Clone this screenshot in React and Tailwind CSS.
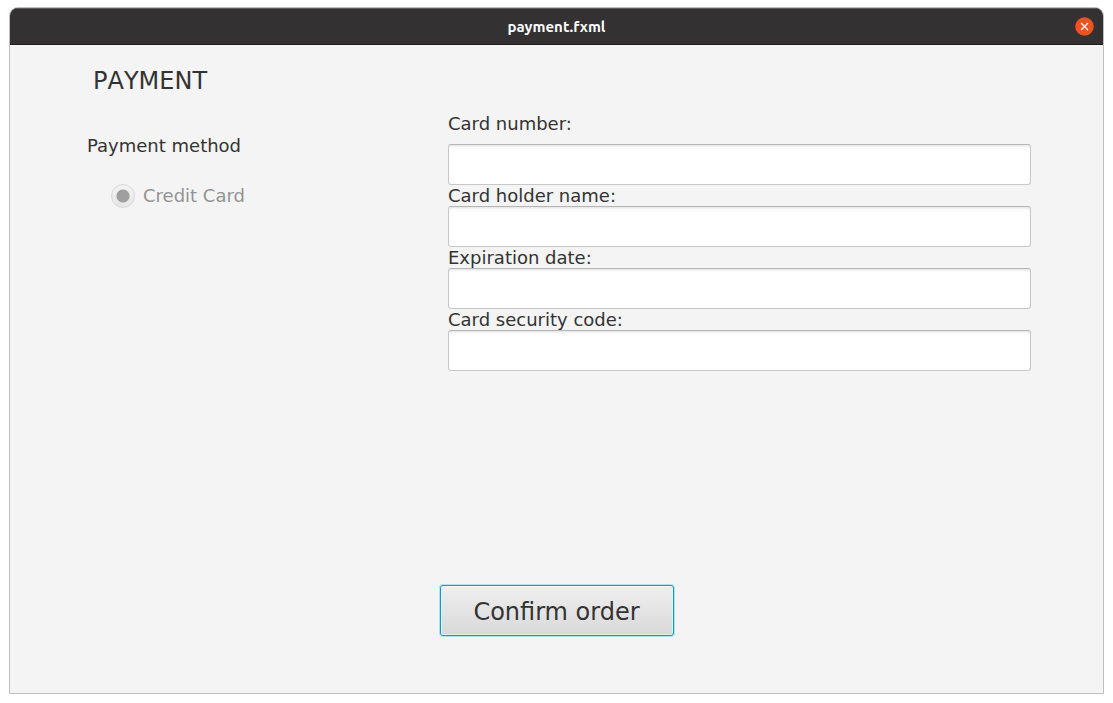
const fields = [
  { id: "number", label: "Card number:", gap: "mb-[10px]" },
  { id: "holder", label: "Card holder name:", gap: "" },
  { id: "expiration", label: "Expiration date:", gap: "" },
  { id: "code", label: "Card security code:", gap: "" },
];

export default function App() {
  return (
    <div className="flex min-h-screen flex-col bg-white px-[9px] pt-[7px] pb-[9px] font-['DejaVu_Sans',sans-serif] text-[#333]">
      <div className="flex grow flex-col overflow-hidden rounded-t-[9px] border border-[#bfbfbf] bg-[#f4f4f4]">
        <header className="grid h-[37px] grid-cols-[1fr_auto_1fr] items-center border-t border-b border-t-[#5c5b5b] border-b-[#1f1f1f] bg-[#333132] px-[9px]">
          <span />
          <h1 className="pt-px font-['Ubuntu','Noto_Sans',sans-serif] text-[15px] leading-5 font-bold text-white">payment.fxml</h1>
          <button type="button" aria-label="Close" className="justify-self-end">
            <svg className="block size-[19px]" viewBox="0 0 19 19">
              <circle cx="9.5" cy="9.5" r="9.3" fill="#e95420" />
              <path d="M6 6l7 7M13 6l-7 7" stroke="#fff" strokeWidth="1.3" fill="none" />
            </svg>
          </button>
        </header>
        <main className="flex grow flex-col pb-[57px]">
          <div className="grid grow grid-cols-[438fr_583fr_72fr] items-start">
            <section className="pl-[77px]">
              <h2 className="mt-[22px] ml-[6px] text-[24px] leading-[28px] [font-kerning:none]">PAYMENT</h2>
              <fieldset className="mt-10">
                <legend className="text-[18px] leading-[21px]">Payment method</legend>
                <label className="mt-[27px] ml-6 flex items-center gap-2 text-[18px] leading-6 text-[#939393]">
                  <input
                    type="radio"
                    name="method"
                    defaultChecked
                    disabled
                    className="size-6 appearance-none rounded-full border border-[#d8d8d8] bg-[radial-gradient(circle,#9f9f9f_6px,transparent_7px),linear-gradient(#f3f3f3,#e6e6e6)]"
                  />
                  <span className="pt-px">Credit Card</span>
                </label>
              </fieldset>
            </section>
            <form id="payment" className="mt-[68px] flex flex-col">
              {fields.map(({ id, label, gap }) => (
                <div key={id} className="flex flex-col">
                  <label htmlFor={id} className={`text-[18px] leading-[21px] ${gap}`}>{label}</label>
                  <input
                    id={id}
                    type="text"
                    className="h-[41px] rounded-[3px] border border-[#c8c8c8] border-t-[#b5b5b5] bg-white px-3 text-[18px] shadow-[inset_0_2px_3px_-1px_#ddd] outline-none"
                  />
                </div>
              ))}
            </form>
          </div>
          <button
            type="submit"
            form="payment"
            className="h-[51px] w-[234px] self-center rounded-[3px] border border-[#039ed3] bg-linear-to-b from-[#efefef] to-[#d9d9d9] pt-[2px] text-[24px] shadow-[0_0_0_1px_#039ed340,inset_0_0_0_1px_#ffffff80]"
          >
            Confirm order
          </button>
        </main>
      </div>
    </div>
  );
}
